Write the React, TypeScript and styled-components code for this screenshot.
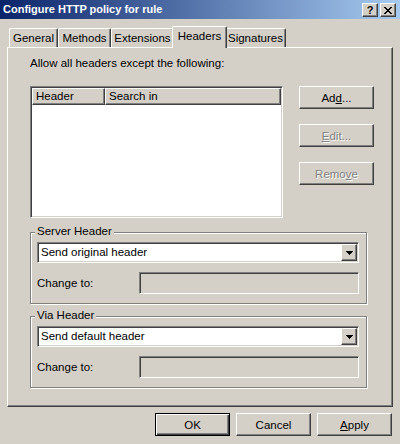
import React from 'react';
import styled, { createGlobalStyle, css } from 'styled-components';

const GlobalStyle = createGlobalStyle`
    html, body {
        margin: 0;
        padding: 0;
        background: #d4d0c8;
    }
    body {
        font-family: "Liberation Sans", Arial, sans-serif;
        font-size: 11.5px;
        color: #000;
    }
`;

const raised = css`
    border: 1px solid;
    border-color: #ffffff #404040 #404040 #ffffff;
    box-shadow: inset -1px -1px 0 #808080;
`;

const sunken = css`
    border: 1px solid;
    border-color: #808080 #ffffff #ffffff #808080;
    box-shadow: inset 1px 1px 0 #404040, inset -1px -1px 0 #d4d0c8;
`;

// tab widths as the dialog measured them for each caption
const TABS = [
    { name: 'General', width: 49 },
    { name: 'Methods', width: 53 },
    { name: 'Extensions', width: 63 },
    { name: 'Headers', width: 51 },
    { name: 'Signatures', width: 61 },
];
const ACTIVE_TAB = 'Headers';

const CloseGlyph = () => (
    <svg width='8' height='7' viewBox='0 0 8 7' shapeRendering='crispEdges'>
        <path
            fill='#000'
            d='M0 0h2v1H0z M6 0h2v1H6z M1 1h2v1H1z M5 1h2v1H5z M2 2h4v1H2z M3 3h2v1H3z M2 4h4v1H2z M1 5h2v1H1z M5 5h2v1H5z M0 6h2v1H0z M6 6h2v1H6z'
        />
    </svg>
);

const DownArrow = () => (
    <svg width='7' height='4' viewBox='0 0 7 4' shapeRendering='crispEdges'>
        <path fill='#000' d='M0 0h7v1H0z M1 1h5v1H1z M2 2h3v1H2z M3 3h1v1H3z' />
    </svg>
);

interface HeaderGroupProps {
    caption: string;
    value: string;
    top: number;
}

const HeaderGroup = ({ caption, value, top }: HeaderGroupProps) => (
    <GroupBox $top={top}>
        <Caption>{caption}</Caption>
        <Combo>
            <ComboText>{value}</ComboText>
            <DropButton>
                <DownArrow />
            </DropButton>
        </Combo>
        <ChangeRow>
            <ChangeLabel>Change to:</ChangeLabel>
            <TextBox />
        </ChangeRow>
    </GroupBox>
);

export default function App() {
    return (
        <Window>
            <GlobalStyle />
            <TitleBar>
                <Title>Configure HTTP policy for rule</Title>
                <TitleButtons>
                    <TitleButton>?</TitleButton>
                    <TitleButton>
                        <CloseGlyph />
                    </TitleButton>
                </TitleButtons>
            </TitleBar>
            <Body>
                <TabStrip>
                    {TABS.map((tab) => (
                        <Tab
                            key={tab.name}
                            $width={tab.width}
                            $active={tab.name === ACTIVE_TAB}
                        >
                            {tab.name}
                        </Tab>
                    ))}
                </TabStrip>
                <Panel>
                    <Hint>Allow all headers except the following:</Hint>
                    <TopRow>
                        <ListView>
                            <ListHeader>
                                <HeaderCell $width={73}>Header</HeaderCell>
                                <HeaderCell>Search in</HeaderCell>
                            </ListHeader>
                        </ListView>
                        <SideButtons>
                            <Button>
                                Ad<u>d</u>...
                            </Button>
                            <Button disabled>
                                <u>E</u>dit...
                            </Button>
                            <Button disabled>
                                Remo<u>v</u>e
                            </Button>
                        </SideButtons>
                    </TopRow>
                    <HeaderGroup
                        caption='Server Header'
                        value='Send original header'
                        top={14}
                    />
                    <HeaderGroup
                        caption='Via Header'
                        value='Send default header'
                        top={12}
                    />
                </Panel>
                <Footer>
                    <Button $default>OK</Button>
                    <Button>Cancel</Button>
                    <Button>
                        <u>A</u>pply
                    </Button>
                </Footer>
            </Body>
        </Window>
    );
}

const Window = styled.div`
    width: 400px;
    height: 444px;
    overflow: hidden;
    background: #d4d0c8;
    display: flex;
    flex-direction: column;
`;
const TitleBar = styled.div`
    height: 19px;
    flex-shrink: 0;
    display: flex;
    align-items: center;
    padding: 0 4px 0 3px;
    background: linear-gradient(to right, #0a246a, #a6caf0);
`;
const Title = styled.div`
    color: #ffffff;
    font-size: 11px;
    font-weight: bold;
    line-height: 13px;
    white-space: nowrap;
`;
const TitleButtons = styled.div`
    margin-left: auto;
    display: flex;
    gap: 2px;
    padding-top: 1px;
`;
const TitleButton = styled.div`
    box-sizing: border-box;
    width: 16px;
    height: 14px;
    ${raised};
    background: #d4d0c8;
    display: flex;
    align-items: center;
    justify-content: center;
    font-size: 11px;
    font-weight: bold;
    line-height: 12px;
`;
const Body = styled.div`
    padding: 7px 7px 0 7px;
`;
const TabStrip = styled.div`
    display: flex;
    align-items: flex-end;
    height: 21px;
    padding-left: 2px;
    position: relative;
    z-index: 1;
`;
const Tab = styled.div<{ $active?: boolean; $width: number }>`
    box-sizing: border-box;
    width: ${(p) => p.$width + (p.$active ? 4 : 0)}px;
    height: ${(p) => (p.$active ? 22 : 19)}px;
    margin: ${(p) => (p.$active ? '0 -2px -1px' : '0')};
    padding-top: 3px;
    text-align: center;
    line-height: 13px;
    white-space: nowrap;
    background: #d4d0c8;
    border-top: 1px solid #ffffff;
    border-left: 1px solid #ffffff;
    border-right: 1px solid #404040;
    border-radius: 2px 2px 0 0;
    box-shadow: inset -1px 0 0 #808080;
    position: relative;
    z-index: ${(p) => (p.$active ? 2 : 0)};
`;
const Panel = styled.div`
    box-sizing: border-box;
    height: 360px;
    padding: 9px 0 0 22px;
    border: 1px solid;
    border-color: #ffffff #404040 #404040 #ffffff;
    box-shadow: inset -1px -1px 0 #808080;
`;
const Hint = styled.div`
    line-height: 13px;
`;
const TopRow = styled.div`
    display: flex;
    align-items: flex-start;
    margin-top: 16px;
`;
const ListView = styled.div`
    box-sizing: border-box;
    width: 253px;
    height: 132px;
    padding: 1px;
    background: #ffffff;
    ${sunken};
`;
const ListHeader = styled.div`
    display: flex;
    height: 17px;
`;
const HeaderCell = styled.div<{ $width?: number }>`
    box-sizing: border-box;
    ${(p) => (p.$width ? `width: ${p.$width}px;` : 'flex: 1;')}
    height: 17px;
    padding-left: 3px;
    line-height: 15px;
    background: #d4d0c8;
    ${raised};
`;
const SideButtons = styled.div`
    display: flex;
    flex-direction: column;
    gap: 15px;
    margin-left: 16px;
`;
const Button = styled.button<{ $default?: boolean }>`
    box-sizing: border-box;
    width: 75px;
    height: 23px;
    padding: 0;
    font: inherit;
    color: #000;
    background: #d4d0c8;
    ${(p) =>
        p.$default
            ? css`
                  border: 1px solid #000;
                  box-shadow: inset 1px 1px 0 #ffffff, inset -1px -1px 0 #404040,
                      inset -2px -2px 0 #808080;
              `
            : raised};
    &:disabled {
        color: #808080;
        text-shadow: 1px 1px 0 #ffffff;
    }
    u {
        text-underline-offset: 1px;
    }
`;
const GroupBox = styled.div<{ $top: number }>`
    position: relative;
    box-sizing: border-box;
    width: 337px;
    margin-top: ${(p) => p.$top}px;
    padding: 9px 7px 9px 6px;
    border: 1px solid #808080;
    box-shadow: inset 1px 1px 0 #ffffff, 1px 1px 0 #ffffff;
`;
const Caption = styled.span`
    position: absolute;
    top: -8px;
    left: 4px;
    padding: 0 2px;
    line-height: 13px;
    background: #d4d0c8;
`;
const Combo = styled.div`
    box-sizing: border-box;
    height: 21px;
    padding: 1px;
    display: flex;
    align-items: stretch;
    background: #ffffff;
    ${sunken};
`;
const ComboText = styled.div`
    flex: 1;
    padding-left: 2px;
    line-height: 17px;
`;
const DropButton = styled.div`
    box-sizing: border-box;
    width: 16px;
    height: 17px;
    background: #d4d0c8;
    ${raised};
    display: flex;
    align-items: center;
    justify-content: center;
`;
const ChangeRow = styled.div`
    display: flex;
    align-items: center;
    margin-top: 9px;
`;
const ChangeLabel = styled.div`
    width: 102px;
    line-height: 13px;
`;
const TextBox = styled.div`
    box-sizing: border-box;
    flex: 1;
    height: 22px;
    background: #d4d0c8;
    ${sunken};
`;
const Footer = styled.div`
    display: flex;
    justify-content: flex-end;
    gap: 6px;
    margin-top: 6px;
    padding-right: 1px;
`;
